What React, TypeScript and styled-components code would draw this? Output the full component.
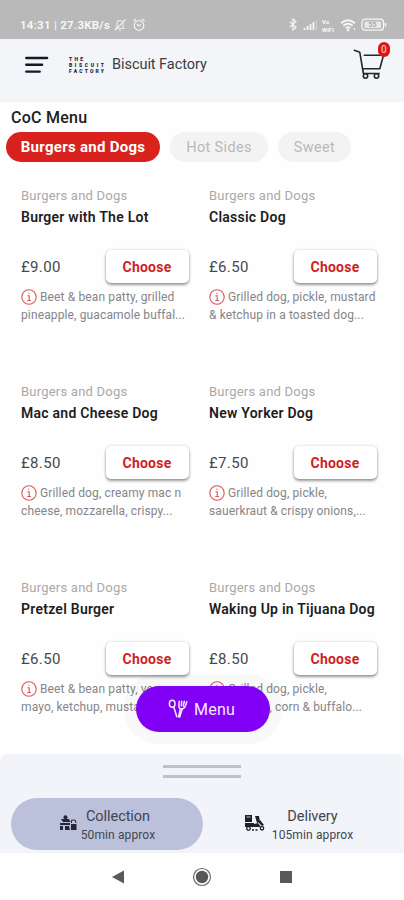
import React from "react";
import styled, { createGlobalStyle } from "styled-components";

const Global = createGlobalStyle`
  * { box-sizing: border-box; }
  body { margin: 0; background: #fff; font-family: Roboto, "Liberation Sans", sans-serif; }
`;

const Screen = styled.div`
  width: 404px;
  height: 900px;
  display: flex;
  flex-direction: column;
  overflow: hidden;
  background: #fefefe;
`;

const StatusBar = styled.div`
  height: 39px;
  flex: none;
  display: flex;
  align-items: center;
  justify-content: space-between;
  padding: 11px 17px 0 20px;
  background: #b9b9b9;
  color: #f8f8f8;
`;

const StatusGroup = styled.div<{ $gap: number }>`
  display: flex;
  align-items: center;
  gap: ${(p) => p.$gap}px;
`;

const Clock = styled.span`
  width: 91px;
  font-size: 11.5px;
  font-weight: 600;
  letter-spacing: 0.27px;
  white-space: nowrap;
`;

const VoWifi = styled.div`
  width: 14px;
  display: flex;
  flex-direction: column;
  gap: 1px;
  font-size: 6px;
  line-height: 7px;
  font-weight: 700;
`;

const Header = styled.header`
  height: 63px;
  flex: none;
  display: flex;
  align-items: flex-start;
  padding: 2px 13px 0 25px;
  background: #f3f5f8;
`;

const MenuIcon = styled.svg`
  margin-top: 15px;
`;

const Logo = styled.div`
  width: 36px;
  margin: 15px 0 0 20px;
  display: flex;
  flex-direction: column;
  color: #222226;
`;

const LogoRow = styled.div<{ $width: number }>`
  width: ${(p) => p.$width}px;
  display: flex;
  justify-content: space-between;
  font-size: 5px;
  line-height: 6.2px;
  font-weight: 900;
`;

const Brand = styled.div`
  flex: 1;
  margin: 14px 0 0 7px;
  font-size: 14.5px;
  line-height: 20px;
  letter-spacing: -0.05px;
  color: #3b3c40;
`;

const Cart = styled.div`
  position: relative;
  width: 38px;
  height: 40px;
`;

const CartBadge = styled.span`
  position: absolute;
  right: 1px;
  top: 0.5px;
  width: 12.5px;
  height: 15px;
  border-radius: 6px;
  background: #dc1515;
  color: #f7b9b9;
  font-size: 10px;
  line-height: 15px;
  font-weight: 500;
  text-align: center;
`;

const Content = styled.main`
  position: relative;
  height: 652px;
  flex: none;
  background: #fefefe;
`;

const Title = styled.h1`
  margin: 0;
  padding: 6px 0 0 11px;
  height: 30px;
  font-size: 16px;
  line-height: 20px;
  font-weight: 500;
  letter-spacing: 0.25px;
  color: #202020;
`;

const Tabs = styled.nav`
  display: flex;
  gap: 10px;
  padding-left: 6px;
`;

const Tab = styled.button<{ $width: number; $active?: boolean }>`
  width: ${(p) => p.$width}px;
  height: 30px;
  padding: 0;
  border: 0;
  border-radius: 15px;
  font-family: inherit;
  font-size: ${(p) => (p.$active ? 15 : 14.5)}px;
  font-weight: ${(p) => (p.$active ? 700 : 400)};
  letter-spacing: ${(p) => (p.$active ? 0.28 : 0.35)}px;
  background: ${(p) => (p.$active ? "#d9211e" : "#f3f3f3")};
  color: ${(p) => (p.$active ? "#fff" : "#b9b9b9")};
`;

const Grid = styled.div`
  display: grid;
  grid-template-columns: 188px 188px;
  grid-auto-rows: 196px;
  padding: 25px 0 0 21px;
  height: 592px;
  overflow: hidden;
`;

const Card = styled.article`
  width: 167.5px;
`;

const Category = styled.div`
  font-size: 13px;
  line-height: 18px;
  letter-spacing: 0.22px;
  color: #a9a9a9;
`;

const Name = styled.h2`
  margin: 2px 0 0;
  font-size: 14px;
  line-height: 20px;
  font-weight: 600;
  letter-spacing: 0.25px;
  white-space: nowrap;
  color: #1d1d1f;
`;

const PriceRow = styled.div`
  display: flex;
  align-items: center;
  justify-content: space-between;
  height: 34px;
  margin-top: 22px;
`;

const Price = styled.span`
  padding-top: 1px;
  font-size: 15px;
  letter-spacing: 0.35px;
  color: #48484a;
`;

const Choose = styled.button`
  width: 83px;
  height: 33px;
  padding: 1px 0 0;
  border: 0;
  border-radius: 5px;
  background: #fff;
  color: #d01f1f;
  font-family: inherit;
  font-size: 14px;
  font-weight: 700;
  letter-spacing: 0.25px;
  box-shadow: 0 2px 3px rgba(0, 0, 0, 0.38), 0 0 3px rgba(0, 0, 0, 0.16);
`;

const Description = styled.div`
  margin-top: 5.5px;
  color: #858589;
  font-size: 12px;
`;

const Line = styled.div`
  display: flex;
  align-items: center;
  gap: 3px;
  height: 17.5px;
  letter-spacing: 0.13px;
  white-space: nowrap;
`;

const MenuButton = styled.button`
  position: absolute;
  left: 136px;
  top: 584px;
  width: 134px;
  height: 46px;
  padding: 0 3px 0 0;
  border: 0;
  border-radius: 23px;
  display: flex;
  align-items: center;
  justify-content: center;
  gap: 6px;
  background: #8100f5;
  color: #f6eaff;
  font-family: inherit;
  font-size: 16px;
  letter-spacing: 0.2px;
  box-shadow: 0 0 0 12px rgba(20, 20, 30, 0.028);
`;

const Sheet = styled.section`
  height: 99px;
  flex: none;
  padding: 11px 11px 0;
  display: flex;
  flex-direction: column;
  align-items: center;
  border-radius: 8px 8px 0 0;
  background: #f2f4f9;
`;

const Handle = styled.div`
  width: 78px;
  height: 13px;
  border-top: 3px solid #bfc1c6;
  border-bottom: 3px solid #bfc1c6;
`;

const Options = styled.div`
  width: 100%;
  display: flex;
  gap: 10px;
  margin-top: 20px;
`;

const Option = styled.button<{ $selected?: boolean }>`
  width: ${(p) => (p.$selected ? 192 : 180)}px;
  height: 52px;
  padding: ${(p) => (p.$selected ? "2px 0 0" : "2px 9px 0 0")};
  border: 0;
  border-radius: 26px;
  display: flex;
  align-items: center;
  justify-content: center;
  gap: ${(p) => (p.$selected ? 4 : 7)}px;
  background: ${(p) => (p.$selected ? "#bbc1da" : "transparent")};
  color: #414550;
  font-family: inherit;
  text-align: center;
`;

const OptionIcon = styled.svg`
  flex: none;
  margin-bottom: 5px;
`;

const OptionName = styled.div`
  font-size: 14.5px;
  line-height: 19px;
  letter-spacing: -0.05px;
`;

const OptionTime = styled.div`
  font-size: 12px;
  line-height: 18px;
  letter-spacing: 0.12px;
  white-space: nowrap;
`;

const SystemNav = styled.nav`
  height: 47px;
  flex: none;
  display: flex;
  align-items: center;
  justify-content: center;
  gap: 67px;
  background: #fefefe;
`;

type Item = { name: string; price: string; lines: [string, string] };

const items: Item[] = [
  { name: "Burger with The Lot", price: "£9.00", lines: ["Beet & bean patty, grilled", "pineapple, guacamole buffal..."] },
  { name: "Classic Dog", price: "£6.50", lines: ["Grilled dog, pickle, mustard", "& ketchup in a toasted dog..."] },
  { name: "Mac and Cheese Dog", price: "£8.50", lines: ["Grilled dog, creamy mac n", "cheese, mozzarella, crispy..."] },
  { name: "New Yorker Dog", price: "£7.50", lines: ["Grilled dog, pickle,", "sauerkraut & crispy onions,..."] },
  { name: "Pretzel Burger", price: "£6.50", lines: ["Beet & bean patty, vegan", "mayo, ketchup, mustard..."] },
  { name: "Waking Up in Tijuana Dog", price: "£8.50", lines: ["Grilled dog, pickle,", "guacamole, corn & buffalo..."] },
];

const InfoIcon = () => (
  <svg width="16" height="16" viewBox="0 0 16 16" fill="none" stroke="#dc5555" strokeWidth="1.1">
    <circle cx="8" cy="8" r="7.2" />
    <path d="M6.5 6.8H8.2V11.5M6.3 11.5H10M7.4 4.4H8.4" />
  </svg>
);

const logoRows = [
  { text: "THE", width: 14 },
  { text: "BISCUIT", width: 35 },
  { text: "FACTORY", width: 35 },
];

export default function App() {
  return (
    <>
      <Global />
      <Screen>
        <StatusBar>
          <StatusGroup $gap={3}>
            <Clock>14:31 | 27.3KB/s</Clock>
            <svg width="12" height="14" viewBox="0 0 12 14" fill="none" stroke="#eee" strokeWidth="1.1">
              <path d="M2 10.5h8L9 9V5.5a3 3 0 0 0-6 0V9zM5 12.5h2M.8 12.5L11.5 1.5" />
            </svg>
            <svg width="17" height="14" viewBox="-2 0 17 14" fill="none" stroke="#f2f2f2" strokeWidth="1.2">
              <circle cx="8" cy="7.5" r="4.8" />
              <path d="M2.5 3.2L5 1M11 1l2.5 2.2M5.8 6.2L8 8l2.2-1.5" />
            </svg>
          </StatusGroup>
          <StatusGroup $gap={4}>
            <svg width="29" height="16" viewBox="0 0 29 16" fill="none" stroke="#f5f5f5" strokeWidth="1.2">
              <path d="M1 5l6 5.5L4 13V2l3 2.5L1 10" />
              <path d="M15.5 13v-2M18.5 13v-4M21.5 13V7M24.5 13V5" strokeWidth="1.8" />
              <path d="M27.5 13V3" opacity=".35" />
            </svg>
            <VoWifi><span>Vo</span><span>WiFi</span></VoWifi>
            <svg width="17" height="14" viewBox="0 0 17 14" fill="none" stroke="#f5f5f5" strokeWidth="1.8">
              <path d="M1 5.2q7-6 14 0M3.3 7.8q4.7-4 9.4 0M5.8 10.2q2.2-2 4.4 0" />
              <circle cx="8" cy="12" r=".5" />
              <path d="M14.5 12v-2" strokeWidth="1.2" />
            </svg>
            <svg width="26" height="14" viewBox="0 0 26 14" fill="none">
              <rect x="1" y="1.2" width="21.5" height="11" rx="3" stroke="#f5f5f5" strokeWidth="1.3" />
              <rect x="3.5" y="3.5" width="16.5" height="6.5" rx="1" fill="#e8e8e8" />
              <text x="7.5" y="9.3" fontSize="7" fontWeight="700" fill="#aaa">55</text>
              <path d="M24.5 5v3.5" stroke="#f5f5f5" strokeWidth="1.6" />
            </svg>
          </StatusGroup>
        </StatusBar>
        <Header>
          <MenuIcon width="24" height="18" viewBox="0 0 24 18" stroke="#17172a" strokeWidth="2.4" strokeLinecap="round">
            <path d="M1.3 2h20.8M1.3 8.7h15.8M1.3 15.6h13.4" />
          </MenuIcon>
          <Logo>
            {logoRows.map((row) => (
              <LogoRow key={row.text} $width={row.width}>
                {row.text.split("").map((c, i) => <span key={i}>{c}</span>)}
              </LogoRow>
            ))}
          </Logo>
          <Brand>Biscuit Factory</Brand>
          <Cart>
            <svg width="38" height="40" viewBox="0 0 38 40" fill="none" stroke="#26272b" strokeWidth="1.6" strokeLinecap="round" strokeLinejoin="round">
              <path d="M1.3 9.3l5.5 2 3.6 21.2h15.8M11.3 14.2h19.2l-3.7 13.5H10" />
              <circle cx="12.5" cy="35" r="2.2" />
              <circle cx="23.5" cy="35" r="2.2" />
            </svg>
            <CartBadge>0</CartBadge>
          </Cart>
        </Header>
        <Content>
          <Title>CoC Menu</Title>
          <Tabs>
            <Tab $width={154} $active>Burgers and Dogs</Tab>
            <Tab $width={98}>Hot Sides</Tab>
            <Tab $width={73}>Sweet</Tab>
          </Tabs>
          <Grid>
            {items.map((item) => (
              <Card key={item.name}>
                <Category>Burgers and Dogs</Category>
                <Name>{item.name}</Name>
                <PriceRow>
                  <Price>{item.price}</Price>
                  <Choose>Choose</Choose>
                </PriceRow>
                <Description>
                  <Line><InfoIcon /><span>{item.lines[0]}</span></Line>
                  <Line>{item.lines[1]}</Line>
                </Description>
              </Card>
            ))}
          </Grid>
          <MenuButton>
            <svg width="20" height="20" viewBox="0 0 20 20" fill="none" stroke="#f6eaff" strokeWidth="1.5" strokeLinecap="round">
              <ellipse cx="4.2" cy="4.8" rx="2.8" ry="3.5" />
              <path d="M5.8 8l3 9.8M12.2 10.5L10.5 17.8M14.2 10l-2.5 8" />
              <path d="M11.2 2.2L10.8 7q.3 3 3 3 2.6-.4 3.6-3l1.4-4.2M13.7 2.2l-.4 4.6M16.3 2.3l-1 4.8" />
            </svg>
            Menu
          </MenuButton>
        </Content>
        <Sheet>
          <Handle />
          <Options>
            <Option $selected>
              <OptionIcon width="18" height="16" viewBox="0 0 18 16" fill="#23263a">
                <circle cx="6.5" cy="2.3" r="2" />
                <path d="M2 4h8l1.5 3H4zM1 8h10v2H1zM1 11h3v4H1zM6 11h4l1 4H6zM12 9h5.5v6H12z" />
                <path d="M12.5 8V5.2h3.8L17 8" fill="none" stroke="#23263a" />
              </OptionIcon>
              <div>
                <OptionName>Collection</OptionName>
                <OptionTime>50min approx</OptionTime>
              </div>
            </Option>
            <Option>
              <OptionIcon width="21" height="18" viewBox="0 0 21 18" fill="#202126">
                <path d="M1 1h7v7H1zM1 9h9v4H1zM11 2h4l1 6-3 1zM10 10l4-1 3 4h-7zM16 6l4 5-2 1-3-3z" />
                <path d="M2.5 3h4" stroke="#a8a9ad" strokeWidth="1.2" />
                <g fill="none" stroke="#202126" strokeWidth="1.3">
                  <circle cx="4.5" cy="14.5" r="1.8" />
                  <circle cx="18" cy="14.3" r="1.7" />
                  <path d="M8 16h6" strokeDasharray="2 1.5" />
                </g>
              </OptionIcon>
              <div>
                <OptionName>Delivery</OptionName>
                <OptionTime>105min approx</OptionTime>
              </div>
            </Option>
          </Options>
        </Sheet>
        <SystemNav>
          <svg width="14" height="14" viewBox="0 0 14 14"><path d="M13 0.5v13L1 7z" fill="#59595b" /></svg>
          <svg width="20" height="20" viewBox="0 0 20 20">
            <circle cx="10" cy="10" r="8.5" fill="none" stroke="#6b6b6d" strokeWidth="1.2" />
            <circle cx="10" cy="10" r="6.2" fill="#59595b" />
          </svg>
          <svg width="14" height="14" viewBox="0 0 14 14"><rect x="1" y="1" width="12" height="12" fill="#59595b" /></svg>
        </SystemNav>
      </Screen>
    </>
  );
}
